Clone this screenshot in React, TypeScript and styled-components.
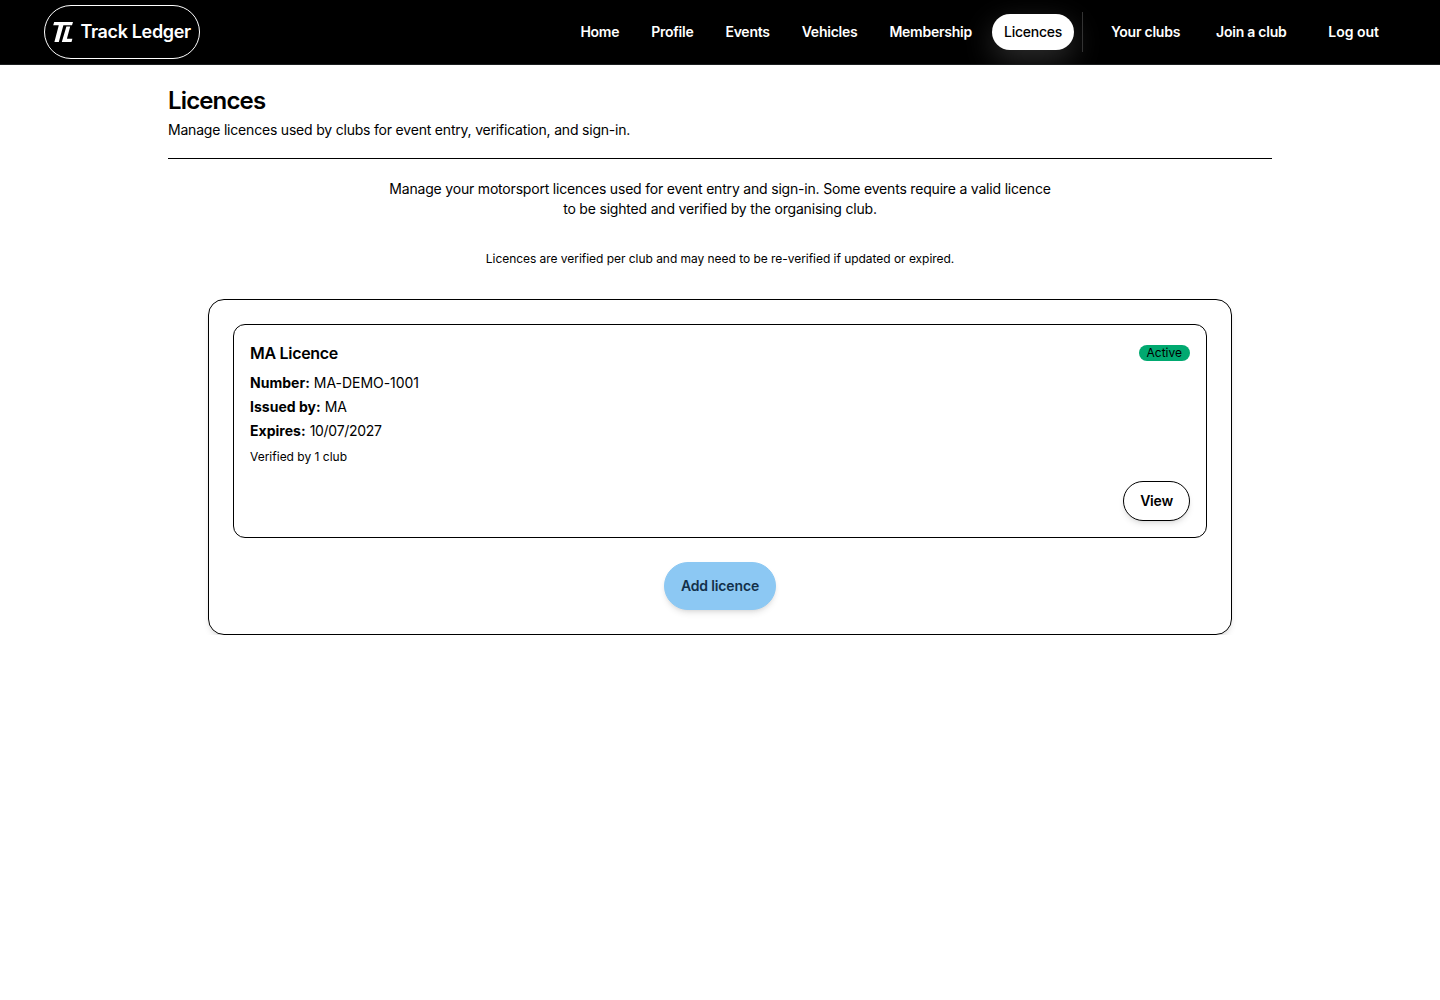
import React from "react";
import styled, { createGlobalStyle, css } from "styled-components";

const GlobalStyle = createGlobalStyle`
  *, *::before, *::after { box-sizing: border-box; }
  body {
    margin: 0;
    background: #fff;
    color: #000;
    font-family: Inter, "Liberation Sans", sans-serif;
    font-size: 14px;
    line-height: 20px;
  }
  h1, h2, p, dl, dd { margin: 0; }
  button { font: inherit; color: inherit; cursor: pointer; }
`;

const Header = styled.header`
  display: flex;
  align-items: center;
  justify-content: space-between;
  height: 65px;
  padding: 0 49px 0 44px;
  background: #000;
  border-bottom: 1px solid #1c1f20;
  overflow: hidden;
`;

const Brand = styled.a`
  display: flex;
  align-items: center;
  gap: 7.5px;
  width: 156px;
  height: 54px;
  padding: 0 8px 0 7px;
  border: 1px solid #fff;
  border-radius: 27px;
  color: #fff;
  font-size: 18px;
  font-weight: 600;
  line-height: 28px;
  letter-spacing: -0.36px;
  white-space: nowrap;
`;

const BrandMark = styled.svg`
  flex: none;
  width: 21px;
  height: 20px;
`;

const Nav = styled.nav`
  display: flex;
  align-items: center;
  height: 64px;
`;

const NavGroup = styled.div<{ $gap: number }>`
  display: flex;
  align-items: center;
  gap: ${({ $gap }) => $gap}px;
`;

const NavItem = styled.a<{ $active?: boolean }>`
  height: 36px;
  padding: 8px 12px;
  border-radius: 18px;
  color: #fff;
  font-weight: 600;
  letter-spacing: -0.25px;
  white-space: nowrap;
  ${({ $active }) =>
    $active &&
    css`
      background: #fff;
      color: #000;
      font-weight: 500;
      box-shadow: 0 10px 30px rgba(255, 255, 255, 0.18);
    `}
`;

const Divider = styled.span`
  width: 1px;
  height: 40px;
  margin: 0 16px 0 8px;
  background: #333;
`;

const LogOut = styled.button`
  margin-left: 17.8px;
  padding: 8px 12px;
  border: 0;
  background: none;
  color: #fff;
  font-weight: 600;
`;

const Main = styled.main`
  width: 1104px;
  margin: 0 auto;
  padding-top: 20px;
`;

const PageHead = styled.div`
  height: 74px;
  border-bottom: 1px solid #000;
`;

const Title = styled.h1`
  font-size: 24px;
  font-weight: 600;
  line-height: 32px;
  letter-spacing: -0.85px;
`;

const Subtitle = styled.p`
  margin-top: 3px;
  letter-spacing: -0.2px;
`;

const Intro = styled.p`
  width: 672px;
  margin: 20px auto 0;
  letter-spacing: -0.19px;
  text-align: center;
`;

const Note = styled.p`
  margin-top: 32px;
  font-size: 12px;
  line-height: 16px;
  letter-spacing: -0.04px;
  text-align: center;
`;

const Panel = styled.section`
  display: flex;
  flex-direction: column;
  align-items: center;
  gap: 24px;
  margin: 32px 40px 0;
  padding: 24px;
  border: 1px solid #000;
  border-radius: 16px;
  box-shadow: 0 4px 6px -1px rgba(0, 0, 0, 0.1), 0 2px 4px -2px rgba(0, 0, 0, 0.1);
`;

const LicenceCard = styled.article`
  width: 100%;
  height: 214px;
  padding: 16px;
  border: 1px solid #000;
  border-radius: 12px;
`;

const CardHead = styled.div`
  display: flex;
  align-items: center;
  justify-content: space-between;
  height: 24px;
`;

const CardTitle = styled.h2`
  font-size: 16px;
  font-weight: 600;
  line-height: 24px;
  letter-spacing: -0.3px;
`;

const Badge = styled.span`
  padding: 0 8px;
  border-radius: 8px;
  background: #00a970;
  font-size: 12px;
  line-height: 16px;
`;

const Details = styled.dl`
  display: grid;
  gap: 4px;
  margin-top: 8px;
`;

const Detail = styled.div`
  display: flex;
  gap: 4px;
`;

const Term = styled.dt`
  font-weight: 700;
  letter-spacing: 0.02px;
`;

const Value = styled.dd<{ $tight?: boolean }>`
  letter-spacing: ${({ $tight }) => ($tight ? "-0.28px" : "-0.05px")};
`;

const Verified = styled.p`
  margin-top: 8px;
  font-size: 12px;
  line-height: 16px;
`;

const CardFoot = styled.div`
  display: flex;
  justify-content: flex-end;
  margin-top: 16px;
`;

const Button = styled.button<{ $primary?: boolean }>`
  height: 40px;
  padding: 0 16px;
  border: 1px solid #000;
  border-radius: 20px;
  background: #fff;
  font-weight: 600;
  letter-spacing: -0.2px;
  box-shadow: 0 4px 6px -1px rgba(0, 0, 0, 0.1), 0 2px 4px -2px rgba(0, 0, 0, 0.1);
  ${({ $primary }) =>
    $primary &&
    css`
      height: 48px;
      border-color: #8cc8f3;
      border-radius: 24px;
      background: #8cc8f3;
      color: #12304a;
      letter-spacing: -0.15px;
    `}
`;

const sections = ["Home", "Profile", "Events", "Vehicles", "Membership", "Licences"];

const details = [
  { term: "Number:", value: "MA-DEMO-1001" },
  { term: "Issued by:", value: "MA" },
  { term: "Expires:", value: "10/07/2027", tight: true },
];

export default function App() {
  return (
    <>
      <GlobalStyle />
      <Header>
        <Brand>
          <BrandMark viewBox="0 0 21 20" fill="#fff" aria-hidden="true">
            <path d="M2.2 0H21L20 3.2H11.4L6.8 20H2.4L6.8 3.2H1.2Z" />
            <path d="M14.4 4.6H18.2L14.9 16.8H20.4L19.5 20H9.8Z" />
          </BrandMark>
          Track Ledger
        </Brand>
        <Nav>
          <NavGroup $gap={8}>
            {sections.map((name) => (
              <NavItem key={name} $active={name === "Licences"}>
                {name}
              </NavItem>
            ))}
          </NavGroup>
          <Divider />
          <NavGroup $gap={12}>
            <NavItem>Your clubs</NavItem>
            <NavItem>Join a club</NavItem>
          </NavGroup>
          <LogOut>Log out</LogOut>
        </Nav>
      </Header>
      <Main>
        <PageHead>
          <Title>Licences</Title>
          <Subtitle>Manage licences used by clubs for event entry, verification, and sign-in.</Subtitle>
        </PageHead>
        <Intro>
          Manage your motorsport licences used for event entry and sign-in. Some events require a valid licence to be
          sighted and verified by the organising club.
        </Intro>
        <Note>Licences are verified per club and may need to be re-verified if updated or expired.</Note>
        <Panel>
          <LicenceCard>
            <CardHead>
              <CardTitle>MA Licence</CardTitle>
              <Badge>Active</Badge>
            </CardHead>
            <Details>
              {details.map(({ term, value, tight }) => (
                <Detail key={term}>
                  <Term>{term}</Term>
                  <Value $tight={tight}>{value}</Value>
                </Detail>
              ))}
            </Details>
            <Verified>Verified by 1 club</Verified>
            <CardFoot>
              <Button>View</Button>
            </CardFoot>
          </LicenceCard>
          <Button $primary>Add licence</Button>
        </Panel>
      </Main>
    </>
  );
}
